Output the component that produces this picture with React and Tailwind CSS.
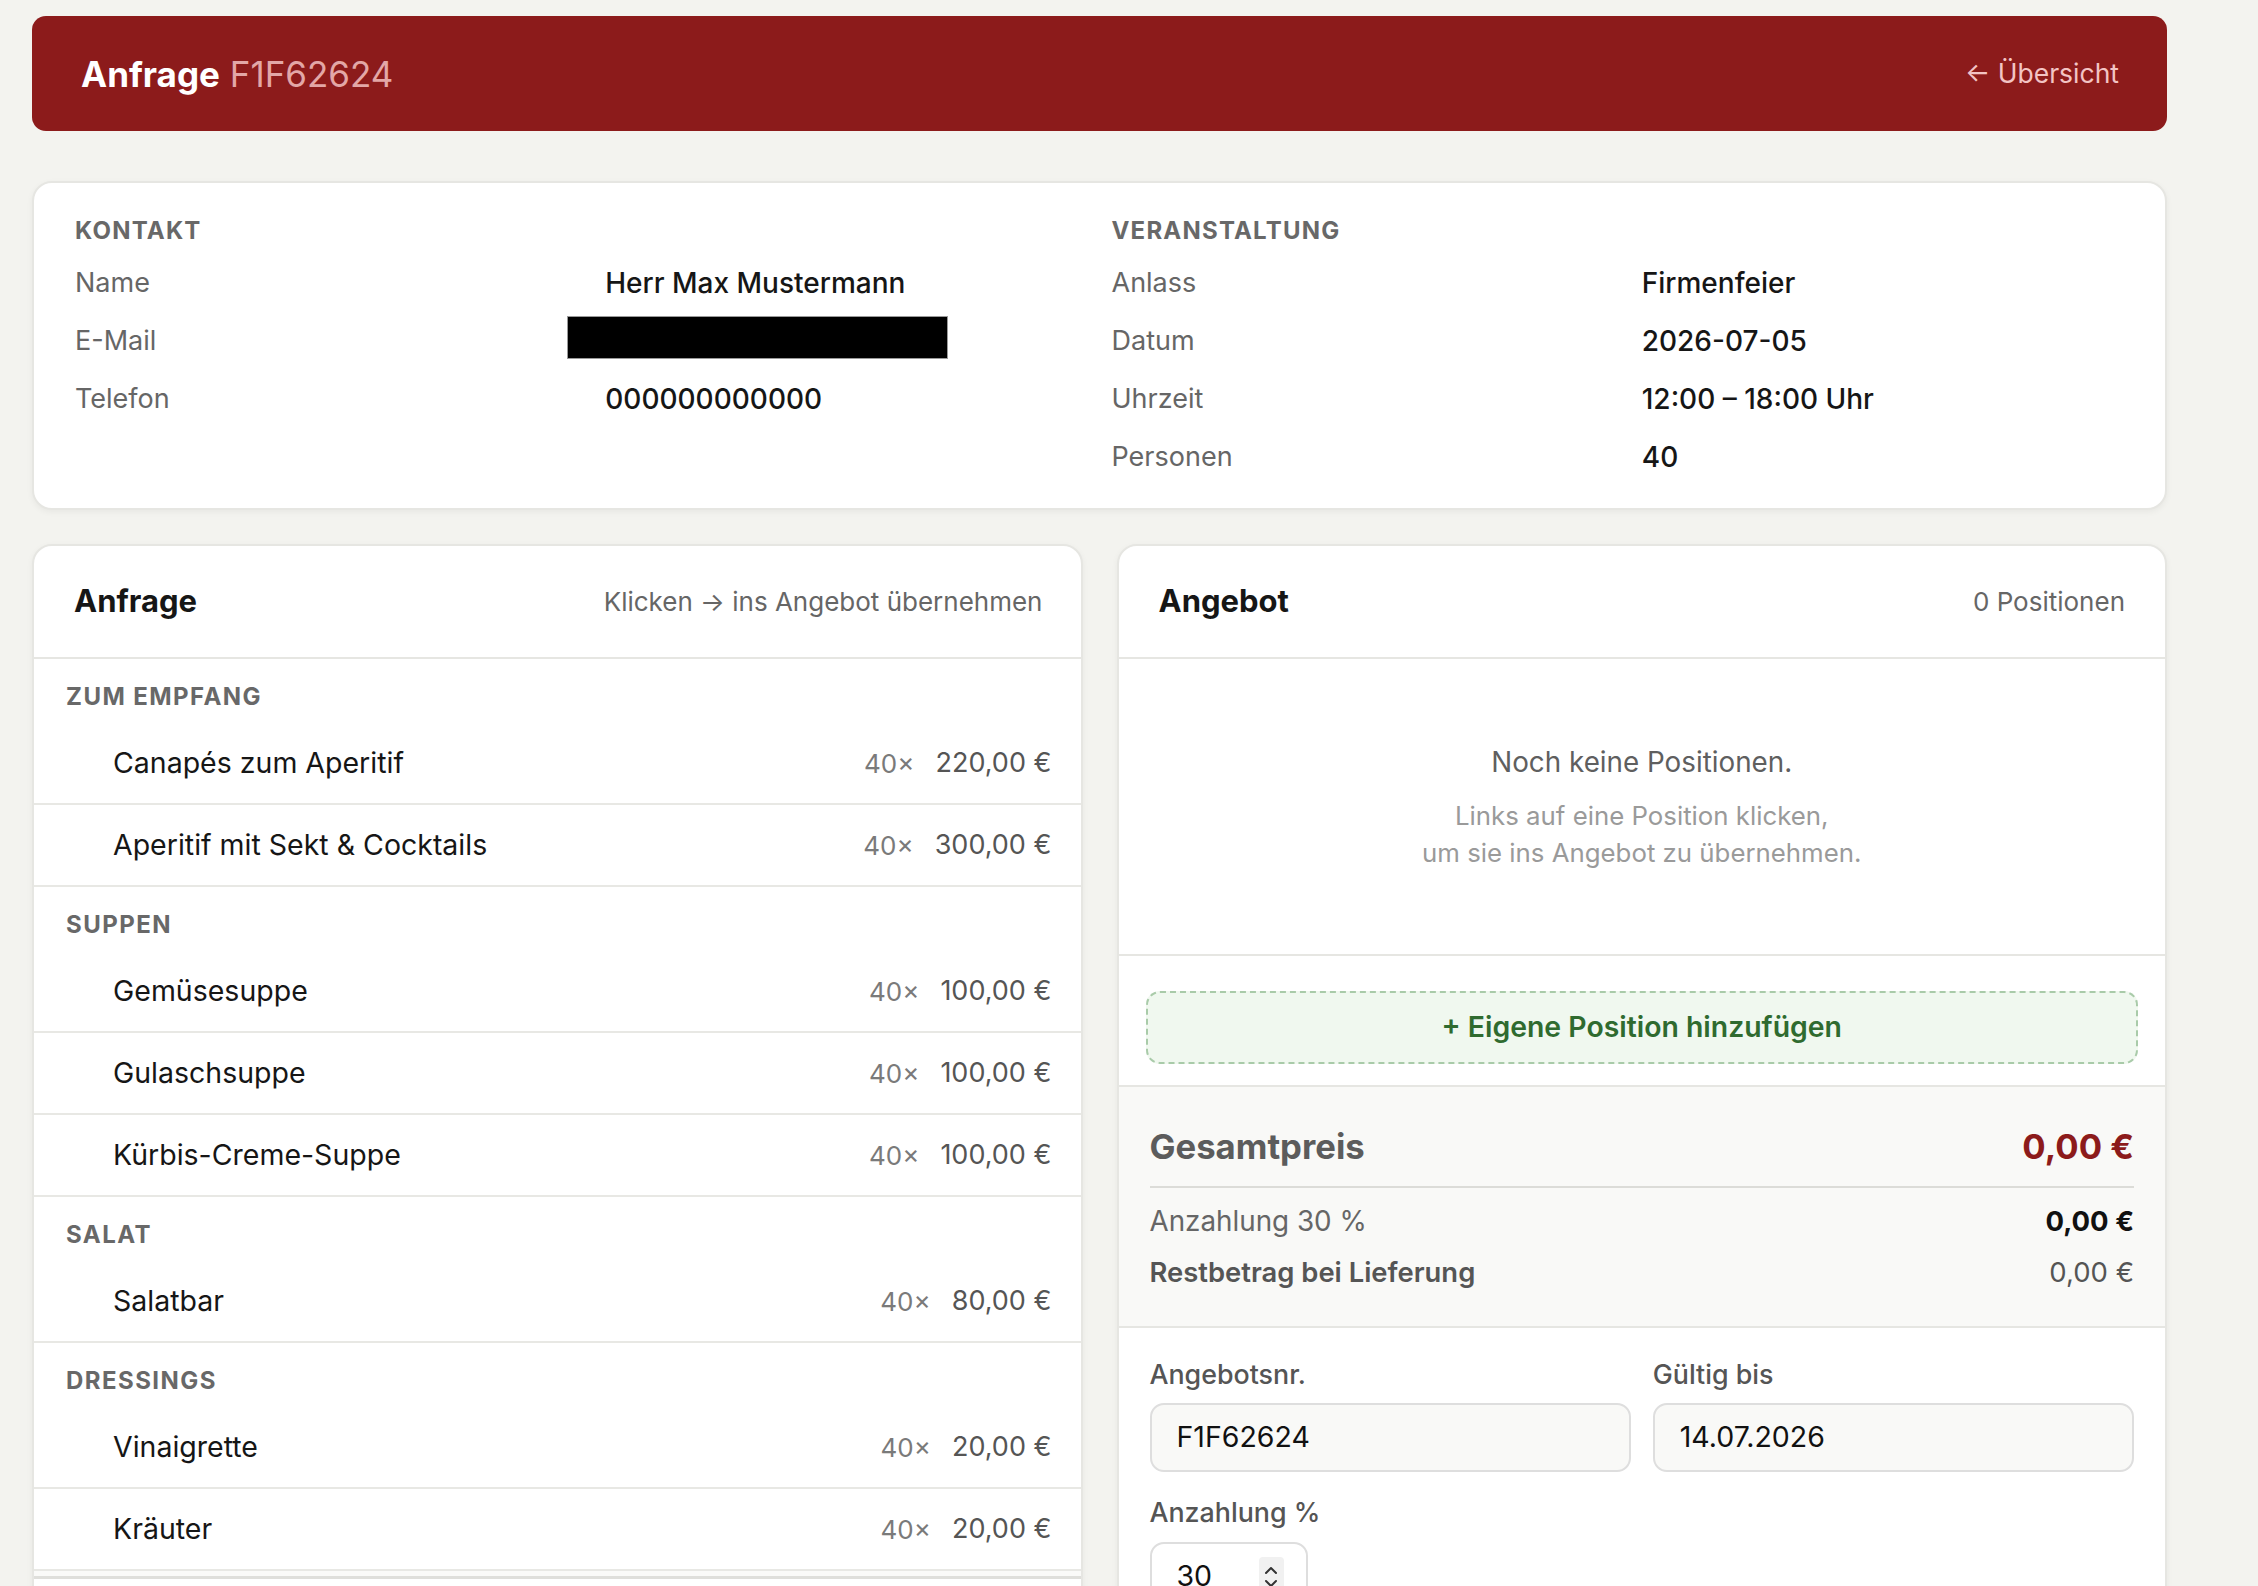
import React from "react";

const sections = [
  { title: "ZUM EMPFANG", items: [["Canapés zum Aperitif", "220,00 €"], ["Aperitif mit Sekt & Cocktails", "300,00 €"]] },
  { title: "SUPPEN", items: [["Gemüsesuppe", "100,00 €"], ["Gulaschsuppe", "100,00 €"], ["Kürbis-Creme-Suppe", "100,00 €"]] },
  { title: "SALAT", items: [["Salatbar", "80,00 €"]] },
  { title: "DRESSINGS", items: [["Vinaigrette", "20,00 €"], ["Kräuter", "20,00 €"]] },
];

function InfoRow({ label, value, redact }) {
  return (
    <>
      <div className="h-[58px] leading-[58px] text-[27px] text-[#666]">{label}</div>
      <div className="relative h-[58px] leading-[58px] text-[28px] font-medium text-[#161616]">
        {value}
        {redact && <div className="absolute left-[-38px] top-[4px] w-[381px] h-[43px] bg-black border border-[#9a9a9a]" />}
      </div>
    </>
  );
}

function SectionTitle({ children }) {
  return (
    <div className="h-[32px] leading-[32px] text-[24px] font-bold tracking-[0.05em] text-[#686868]">{children}</div>
  );
}

export default function App() {
  return (
    <div className="min-h-screen bg-[#f3f3ef] font-['Inter','Liberation_Sans',sans-serif] text-[#161616] overflow-hidden">
      <div className="w-[2135px] ml-[32px] pt-[16px] flex flex-col">
        {/* Header */}
        <div className="h-[115px] rounded-[14px] bg-[#8c1b1b] pl-[49px] pr-[48px] flex items-center justify-between">
          <div className="text-[35px] leading-[44px]">
            <span className="font-bold text-white">Anfrage</span>{" "}
            <span className="text-[#e3a7a7]">F1F62624</span>
          </div>
          <div className="text-[26.5px] text-[#f3c4c4]">← Übersicht</div>
        </div>

        {/* Info card */}
        <div className="mt-[50px] bg-white rounded-[20px] border-2 border-[#e6e6e2] shadow-[0_2px_6px_rgba(0,0,0,0.05)] px-[41px] pt-[32px] pb-[22px] grid grid-cols-2 gap-x-[24px]">
          <div>
            <SectionTitle>KONTAKT</SectionTitle>
            <div className="mt-[7px] grid grid-cols-2 gap-x-[48px]">
              <InfoRow label="Name" value="Herr Max Mustermann" />
              <InfoRow label="E-Mail" value="" redact />
              <InfoRow label="Telefon" value="000000000000" />
            </div>
          </div>
          <div>
            <SectionTitle>VERANSTALTUNG</SectionTitle>
            <div className="mt-[7px] grid grid-cols-2 gap-x-[48px]">
              <InfoRow label="Anlass" value="Firmenfeier" />
              <InfoRow label="Datum" value="2026-07-05" />
              <InfoRow label="Uhrzeit" value="12:00 – 18:00 Uhr" />
              <InfoRow label="Personen" value="40" />
            </div>
          </div>
        </div>

        {/* Panels */}
        <div className="mt-[34px] grid grid-cols-2 gap-[34px] items-start">
          {/* Anfrage */}
          <div className="bg-white rounded-t-[20px] border-2 border-[#e6e6e2] shadow-[0_2px_6px_rgba(0,0,0,0.05)] overflow-hidden">
            <div className="h-[113px] border-b-2 border-[#e6e6e2] flex items-center justify-between pl-[40px] pr-[38px]">
              <div className="text-[31px] font-bold text-[#161616]">Anfrage</div>
              <div className="text-[26px] text-[#666]">Klicken → ins Angebot übernehmen</div>
            </div>
            {sections.map((s) => (
              <div key={s.title}>
                <div className="h-[64px] pl-[32px] pt-[22px]">
                  <div className="leading-[32px] text-[24px] font-bold tracking-[0.06em] text-[#686868]">{s.title}</div>
                </div>
                {s.items.map(([name, price]) => (
                  <div key={name} className="h-[82px] border-b-2 border-[#e8e8e4] flex items-center justify-between pl-[79px] pr-[29px]">
                    <div className="text-[28.5px] text-[#161616]">{name}</div>
                    <div className="flex items-center gap-[21px]">
                      <span className="text-[26px] text-[#7a7a7a]">40×</span>
                      <span className="text-[27px] text-[#555]">{price}</span>
                    </div>
                  </div>
                ))}
              </div>
            ))}
            <div className="h-[8px] bg-[#fafaf8] border-b-[3px] border-[#dfdfdb]" />
            <div className="h-[60px]" />
          </div>

          {/* Angebot */}
          <div className="bg-white rounded-t-[20px] border-2 border-[#e6e6e2] shadow-[0_2px_6px_rgba(0,0,0,0.05)] overflow-hidden">
            <div className="h-[113px] border-b-2 border-[#e6e6e2] flex items-center justify-between pl-[40px] pr-[40px]">
              <div className="text-[31px] font-bold text-[#161616]">Angebot</div>
              <div className="text-[26px] text-[#666]">0 Positionen</div>
            </div>
            <div className="h-[297px] border-b-2 border-[#e6e6e2] flex flex-col items-center justify-center">
              <div className="leading-[40px] text-[27.8px] text-[#5f5f5f]">Noch keine Positionen.</div>
              <div className="mt-[15px] leading-[37px] text-[25.8px] text-[#9a9a9a] text-center">
                Links auf eine Position klicken,
                <br />
                um sie ins Angebot zu übernehmen.
              </div>
            </div>
            <div className="pt-[35px] pb-[21px] px-[27px] border-b-2 border-[#e6e6e2]">
              <div className="h-[73px] rounded-[14px] border-2 border-dashed border-[#a9cba9] bg-[#f0f8ef] flex items-center justify-center text-[28.4px] font-semibold text-[#2f6b2f]">
                + Eigene Position hinzufügen
              </div>
            </div>
            <div className="bg-[#f9f9f7] px-[31px] pt-[37px] pb-[34px] border-b-2 border-[#e6e6e2]">
              <div className="h-[44px] leading-[44px] flex items-baseline justify-between">
                <span className="text-[34.7px] font-bold text-[#5c5c5c]">Gesamtpreis</span>
                <span className="text-[34.7px] font-bold text-[#8c1b1b]">0,00 €</span>
              </div>
              <div className="mt-[18px] border-b-2 border-[#dcdcd8]" />
              <div className="mt-[13px] h-[40px] leading-[40px] flex justify-between">
                <span className="text-[27.8px] text-[#666]">Anzahlung 30 %</span>
                <span className="text-[27.5px] font-bold text-[#111]">0,00 €</span>
              </div>
              <div className="mt-[11px] h-[40px] leading-[40px] flex justify-between">
                <span className="text-[27.4px] font-semibold text-[#555]">Restbetrag bei Lieferung</span>
                <span className="text-[27.5px] text-[#555]">0,00 €</span>
              </div>
            </div>
            <div className="px-[31px] pt-[26px] pb-[40px]">
              <div className="grid grid-cols-2 gap-x-[22px]">
                <div>
                  <div className="h-[40px] leading-[40px] text-[26.8px] font-medium text-[#555]">Angebotsnr.</div>
                  <div className="mt-[9px] h-[69px] rounded-[14px] border-2 border-[#dedede] bg-[#f9f9f7] px-[25px] flex items-center text-[28.5px] text-[#111]">F1F62624</div>
                </div>
                <div>
                  <div className="h-[40px] leading-[40px] text-[26.8px] font-medium text-[#555]">Gültig bis</div>
                  <div className="mt-[9px] h-[69px] rounded-[14px] border-2 border-[#dedede] bg-[#f9f9f7] px-[25px] flex items-center text-[28.5px] text-[#111]">14.07.2026</div>
                </div>
              </div>
              <div className="mt-[20px] h-[40px] leading-[40px] text-[26.8px] font-medium text-[#555]">Anzahlung %</div>
              <div className="mt-[10px] w-[158px] h-[69px] rounded-[14px] border-2 border-[#dedede] bg-white pl-[25px] pr-[22px] flex items-center justify-between text-[28.5px] text-[#111]">
                <span>30</span>
                <span className="w-[25px] h-[40px] rounded-[4px] bg-[#f1f1f1] flex items-center justify-center">
                  <svg width="14" height="30" viewBox="0 0 14 30" fill="none" stroke="#333" strokeWidth="2" strokeLinecap="round" strokeLinejoin="round">
                    <path d="M2 11 L7 6 L12 11" />
                    <path d="M2 19 L7 24 L12 19" />
                  </svg>
                </span>
              </div>
            </div>
          </div>
        </div>
      </div>
    </div>
  );
}
